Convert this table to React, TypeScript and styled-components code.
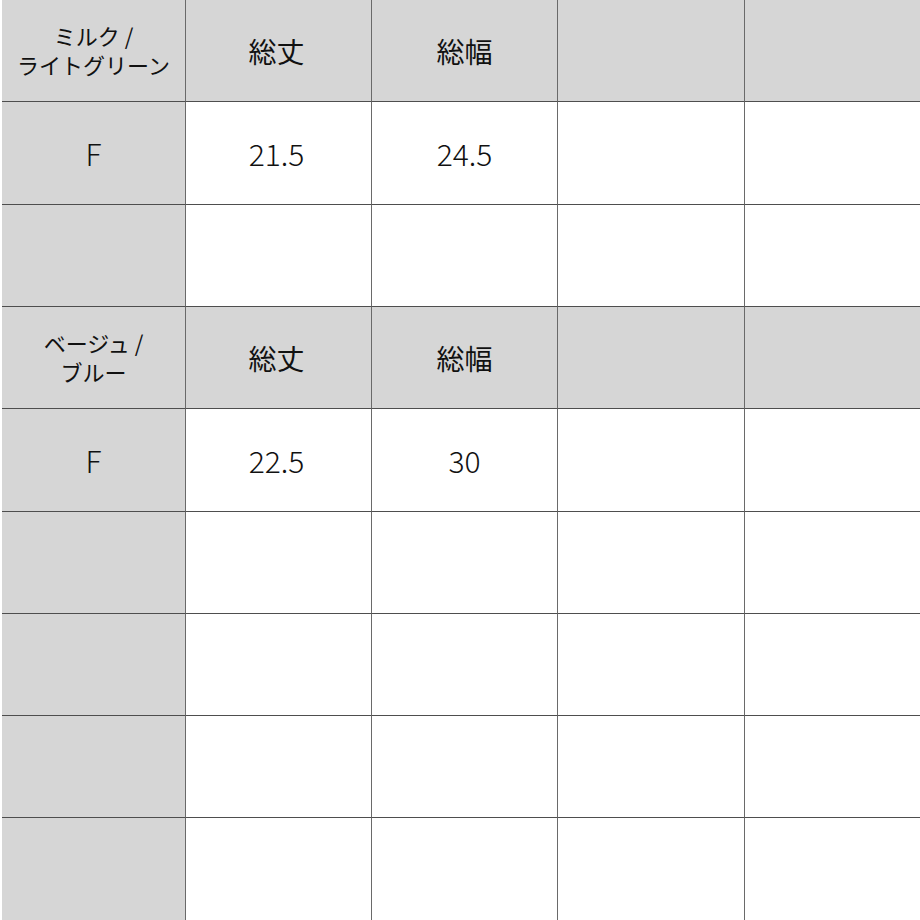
import React from "react";
import styled, { createGlobalStyle } from "styled-components";

const Global = createGlobalStyle`
  html, body { margin: 0; padding: 0; background: #ffffff; }
  body { width: 920px; height: 920px; overflow: hidden; }
`;

const Table = styled.div`
  box-sizing: border-box;
  width: 920px;
  height: 920px;
  padding-left: 2px;
  display: grid;
  grid-template-columns: 184px 186px 186px 187px 1fr;
  grid-template-rows: 102px 103px 102px 102px 103px 102px 102px 102px 1fr;
  background: #ffffff;
  font-family: "Noto Sans CJK JP", "Noto Sans", sans-serif;
  font-weight: 300;
  color: #111111;
  overflow: hidden;
`;

const Cell = styled.div<{ $shade: boolean; $last: boolean; $bottom: boolean }>`
  box-sizing: border-box;
  display: flex;
  align-items: center;
  justify-content: center;
  text-align: center;
  background: ${(p) => (p.$shade ? "#d6d6d6" : "#ffffff")};
  border-bottom: ${(p) => (p.$bottom ? "none" : "1px solid #4e4e4e")};
  border-right: ${(p) => (p.$last ? "none" : "1px solid #6a6a6a")};
  line-height: 1;
`;

const Value = styled.span<{ $num: boolean; $shift: number }>`
  font-size: ${(p) => (p.$num ? "30px" : "28px")};
  font-weight: ${(p) => (p.$num ? 300 : 400)};
  margin-left: ${(p) => p.$shift}px;
`;

const Label = styled.div`
  font-size: 22px;
  font-weight: 400;
  line-height: 29px;
  white-space: pre-line;
  margin-top: -2px;
`;

type Row = { header: boolean; cells: string[] };

const rows: Row[] = [
  { header: true, cells: ["ミルク /\nライトグリーン", "総丈", "総幅", "", ""] },
  { header: false, cells: ["F", "21.5", "24.5", "", ""] },
  { header: false, cells: ["", "", "", "", ""] },
  { header: true, cells: ["ベージュ /\nブルー", "総丈", "総幅", "", ""] },
  { header: false, cells: ["F", "22.5", "30", "", ""] },
  { header: false, cells: ["", "", "", "", ""] },
  { header: false, cells: ["", "", "", "", ""] },
  { header: false, cells: ["", "", "", "", ""] },
  { header: false, cells: ["", "", "", "", ""] },
];

export default function App() {
  return (
    <>
      <Global />
      <Table>
        {rows.map((row, ri) =>
          row.cells.map((text, ci) => (
            <Cell
              key={`${ri}-${ci}`}
              $shade={row.header || ci === 0}
              $last={ci === 4}
              $bottom={ri === rows.length - 1}
            >
              {row.header && ci === 0 ? (
                <Label>{text}</Label>
              ) : text ? (
                <Value $num={!row.header} $shift={ci === 1 ? -4 : 0}>
                  {text}
                </Value>
              ) : null}
            </Cell>
          ))
        )}
      </Table>
    </>
  );
}
